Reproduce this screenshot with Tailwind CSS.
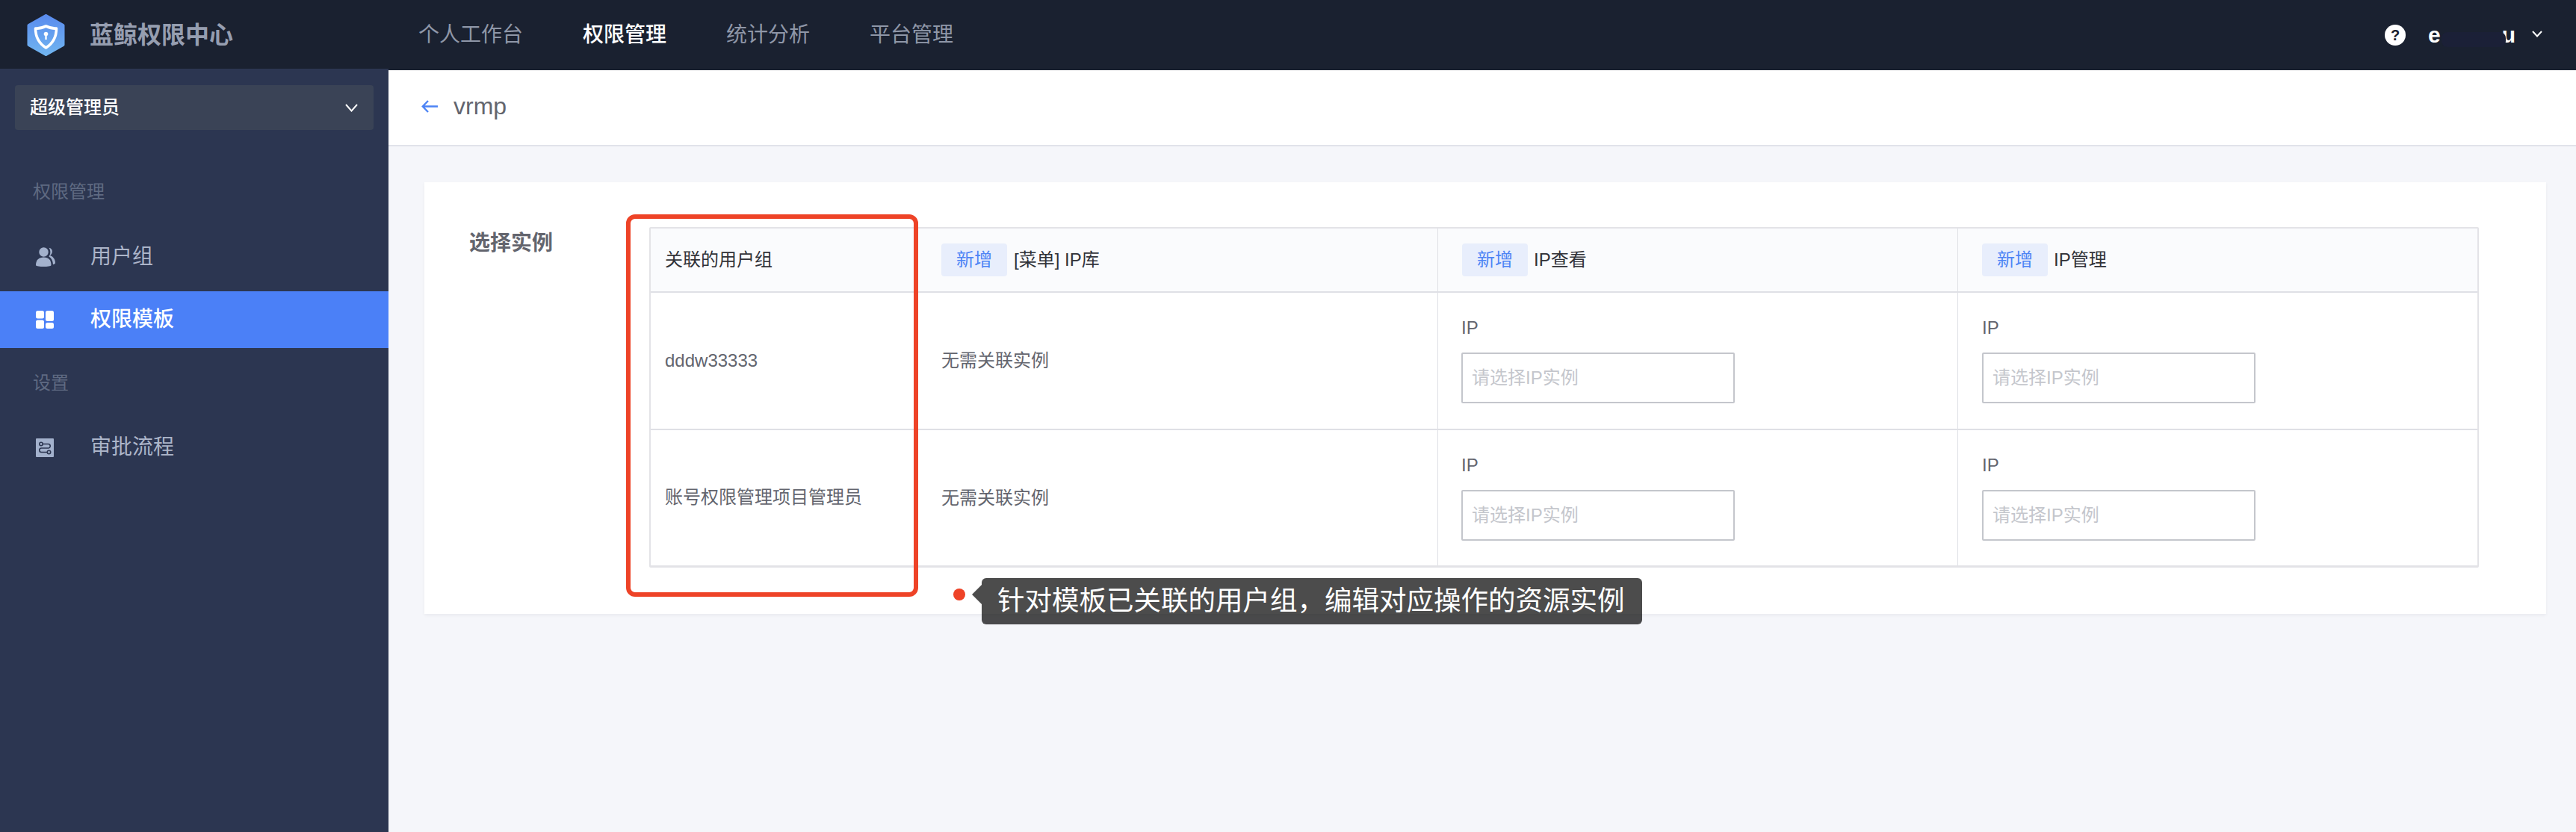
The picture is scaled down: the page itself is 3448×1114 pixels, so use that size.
<!DOCTYPE html>
<html lang="zh-CN">
  <head>
    <meta charset="UTF-8" />
    <title>蓝鲸权限中心</title>
    <script src="https://cdn.jsdelivr.net/npm/@tailwindcss/browser@4"></script>
  </head>
  <body class="h-screen overflow-hidden flex flex-col bg-[#f5f6fa] font-['Liberation_Sans','Noto_Sans_CJK_SC',sans-serif]">
    <!-- top bar -->
    <header class="h-[94px] shrink-0 flex items-center bg-[#1a2130] pl-[36px] pr-[45px]">
      <svg class="w-[51px] h-[56px] shrink-0" viewBox="0 0 51 56">
        <defs>
          <linearGradient id="logoFill" x1="0" y1="0" x2="0" y2="1">
            <stop offset="0" stop-color="#5a8cee" />
            <stop offset="1" stop-color="#70b4f0" />
          </linearGradient>
        </defs>
        <path d="M25.5 2 L48.5 15 V41 L25.5 54 L2.5 41 V15 Z" fill="url(#logoFill)" stroke="url(#logoFill)" stroke-width="4" stroke-linejoin="round" />
        <path d="M25.5 16 C31 18.5 35 19.5 39.5 19 C39.5 30 35 39 25.5 45 C16 39 11.5 30 11.5 19 C16 19.5 20 18.5 25.5 16 Z" fill="none" stroke="#fff" stroke-width="3.6" stroke-linejoin="round" />
        <circle cx="25.5" cy="26.5" r="2.8" fill="#fff" />
        <rect x="24.3" y="27" width="2.4" height="7" fill="#fff" />
      </svg>
      <div class="ml-[33px] w-[440px] shrink-0 text-[32px] font-bold text-[#969eb0]">蓝鲸权限中心</div>
      <nav class="flex gap-[80px] text-[28px] text-[#8f97a8]">
        <span>个人工作台</span>
        <span class="font-medium text-white">权限管理</span>
        <span>统计分析</span>
        <span>平台管理</span>
      </nav>
      <div class="ml-auto flex items-center">
        <div class="w-[28px] h-[28px] rounded-full bg-white flex items-center justify-center text-[20px] font-bold text-[#1a2130]">?</div>
        <div class="relative ml-[30px] w-[117px] flex justify-between text-[30px] font-bold text-white leading-[36px]">
          <span>e</span>
          <span>u</span>
          <div class="absolute left-[18px] top-[14px] w-[86px] h-[20px] rounded-[8px] bg-[#1b2037]"></div>
        </div>
        <svg class="ml-[22px] w-[14px] h-[9px] mb-[4px]" viewBox="0 0 14 9" fill="none" stroke="#fff" stroke-width="2">
          <path d="M1 1 L7 7.5 L13 1" />
        </svg>
      </div>
    </header>

    <div class="flex flex-1 min-h-0">
      <!-- sidebar -->
      <aside class="w-[520px] shrink-0 bg-[#2c3651] -mt-[2px] pt-[22px]">
        <div class="mx-[20px] h-[60px] rounded-[4px] bg-[#3a4356] flex items-center justify-between pl-[20px] pr-[21px] text-[24px] font-medium text-white">
          <span>超级管理员</span>
          <svg class="w-[17px] h-[11px]" viewBox="0 0 17 11" fill="none" stroke="#fff" stroke-width="2">
            <path d="M1 1 L8.5 9.5 L16 1" />
          </svg>
        </div>

        <div class="mt-[65px] pl-[44px] h-[36px] flex items-center text-[24px] text-[#5f6a82]">权限管理</div>
        <a class="mt-[31px] h-[76px] flex items-center pl-[48px] text-[28px] text-[#acb5c9]">
          <svg class="w-[26px] h-[26px] shrink-0" viewBox="0 0 26 26" fill="#a3b1cc">
            <circle cx="10.5" cy="6.5" r="6.2" />
            <path d="M0 24 C0 17 4 13.5 10.5 13.5 C17 13.5 20.5 17 20.5 24 C20.5 25.5 15 26 10.5 26 C5.5 26 0 25.5 0 24 Z" />
            <path d="M17.5 0.8 C20.8 1.5 22.5 4 21.8 7 C21.4 8.8 20.4 10.2 19 11 C23.5 12.5 26 16.5 26 21 C26 22 25 22.8 23 23.2 C22.8 18.5 20.8 14.5 17.5 12.5 C19 10.5 19.5 8 19.3 5.8 C19.1 3.8 18.5 2 17.5 0.8 Z" />
          </svg>
          <span class="ml-[47px]">用户组</span>
        </a>
        <a class="mt-[8px] h-[76px] flex items-center pl-[48px] bg-[#4b80f7] text-[28px] font-medium text-white">
          <svg class="w-[24px] h-[24px] shrink-0" viewBox="0 0 24 24" fill="#fff">
            <rect x="0" y="0" width="11" height="10.5" rx="2.5" />
            <rect x="0" y="12.5" width="11" height="11.5" rx="2.5" />
            <rect x="13" y="0" width="11" height="14" rx="2.5" />
            <rect x="13" y="16" width="11" height="8" rx="2.5" />
          </svg>
          <span class="ml-[49px]">权限模板</span>
        </a>
        <div class="mt-[29px] pl-[44px] h-[36px] flex items-center text-[24px] text-[#5f6a82]">设置</div>
        <a class="mt-[30px] h-[76px] flex items-center pl-[48px] text-[28px] text-[#acb5c9]">
          <svg class="w-[24px] h-[25px] shrink-0" viewBox="0 0 24 25">
            <rect width="24" height="25" rx="1" fill="#a3b1cc" />
            <path d="M9 7.5 H16.5 A2.75 2.75 0 0 1 16.5 13 H7.5 A2.75 2.75 0 0 0 7.5 18.5 H15" fill="none" stroke="#2c3651" stroke-width="1.6" />
            <circle cx="7" cy="7.5" r="2.2" fill="#a3b1cc" stroke="#2c3651" stroke-width="1.6" />
            <circle cx="17.5" cy="18.5" r="2.2" fill="#a3b1cc" stroke="#2c3651" stroke-width="1.6" />
          </svg>
          <span class="ml-[49px]">审批流程</span>
        </a>
      </aside>

      <!-- content -->
      <main class="flex-1 min-w-0">
        <div class="h-[102px] bg-white border-b-2 border-[#e1e3ea] flex items-center pl-[44px] pb-[4px]">
          <svg class="w-[22px] h-[17px] shrink-0" viewBox="0 0 22 17" fill="none" stroke="#4d84f5" stroke-width="2.4">
            <path d="M9 1 L1.8 8.5 L9 16 M2 8.5 H22" />
          </svg>
          <span class="ml-[21px] text-[32px] text-[#63656e]">vrmp</span>
        </div>

        <div class="pt-[48px] pl-[48px] pr-[40px]">
          <section class="relative h-[578px] bg-white shadow-[0_2px_4px_rgba(25,25,41,0.05)] flex pt-[60px]">
            <div class="w-[301px] shrink-0 pl-[60px] pt-[2px] text-[28px] font-bold leading-[40px] text-[#63656e]">选择实例</div>

            <div class="w-[2449px] h-[456px] border-2 border-b-[3px] border-[#e3e3e7] rounded-[2px] text-[24px] text-[#63656e] grid grid-cols-[357px_697px_696px_695px] grid-rows-[86px_184px_181px]">
              <div class="bg-[#fafbfd] border-b-2 border-[#dfe0e5] flex items-center pl-[19px] text-[#313238]">关联的用户组</div>
              <div class="bg-[#fafbfd] border-b-2 border-r border-[#dfe0e5] flex items-center pl-[32px] text-[#313238]">
                <span class="w-[88px] h-[44px] rounded-[4px] bg-[#e8eefc] text-[#4d84f5] flex items-center justify-center">新增</span>
                <span class="ml-[9px]">[菜单] IP库</span>
              </div>
              <div class="bg-[#fafbfd] border-b-2 border-r border-[#dfe0e5] flex items-center pl-[32px] text-[#313238]">
                <span class="w-[88px] h-[44px] rounded-[4px] bg-[#e8eefc] text-[#4d84f5] flex items-center justify-center">新增</span>
                <span class="ml-[8px]">IP查看</span>
              </div>
              <div class="bg-[#fafbfd] border-b-2 border-[#dfe0e5] flex items-center pl-[32px] text-[#313238]">
                <span class="w-[88px] h-[44px] rounded-[4px] bg-[#e8eefc] text-[#4d84f5] flex items-center justify-center">新增</span>
                <span class="ml-[8px]">IP管理</span>
              </div>

              <div class="border-b-2 border-[#dfe0e5] flex items-center pl-[19px]">dddw33333</div>
              <div class="border-b-2 border-r border-[#dfe0e5] flex items-center pl-[32px]">无需关联实例</div>
              <div class="border-b-2 border-r border-[#dfe0e5] pl-[31px] pt-[31px]">
                <div class="leading-[32px]">IP</div>
                <input class="mt-[17px] w-[366px] h-[68px] border-2 border-[#c4c6cc] rounded-[2px] px-[12px] placeholder:text-[#c4c6cc]" placeholder="请选择IP实例" />
              </div>
              <div class="border-b-2 border-[#dfe0e5] pl-[32px] pt-[31px]">
                <div class="leading-[32px]">IP</div>
                <input class="mt-[17px] w-[366px] h-[68px] border-2 border-[#c4c6cc] rounded-[2px] px-[12px] placeholder:text-[#c4c6cc]" placeholder="请选择IP实例" />
              </div>

              <div class="flex items-center pl-[19px] pb-[1px]">账号权限管理项目管理员</div>
              <div class="border-r border-[#dfe0e5] flex items-center pl-[32px]">无需关联实例</div>
              <div class="border-r border-[#dfe0e5] pl-[31px] pt-[31px]">
                <div class="leading-[32px]">IP</div>
                <input class="mt-[17px] w-[366px] h-[68px] border-2 border-[#c4c6cc] rounded-[2px] px-[12px] placeholder:text-[#c4c6cc]" placeholder="请选择IP实例" />
              </div>
              <div class="pl-[32px] pt-[31px]">
                <div class="leading-[32px]">IP</div>
                <input class="mt-[17px] w-[366px] h-[68px] border-2 border-[#c4c6cc] rounded-[2px] px-[12px] placeholder:text-[#c4c6cc]" placeholder="请选择IP实例" />
              </div>
            </div>

            <!-- guide overlay -->
            <div class="absolute left-[270px] top-[43px] w-[391px] h-[512px] border-[6px] border-[#ee4327] rounded-[12px]"></div>
            <div class="absolute left-[708px] top-[544px] w-[16px] h-[16px] rounded-full bg-[#ee4327]"></div>
            <div class="absolute left-[746px] top-[530px] w-[884px] h-[62px] rounded-[6px] bg-black/70 flex items-center pl-[21px] text-[36.5px] text-white whitespace-nowrap">
              针对模板已关联的用户组，编辑对应操作的资源实例
              <div class="absolute left-[-13px] top-[9px] border-y-[13px] border-y-transparent border-r-[13px] border-r-black/70"></div>
            </div>
          </section>
        </div>
      </main>
    </div>
  </body>
</html>
